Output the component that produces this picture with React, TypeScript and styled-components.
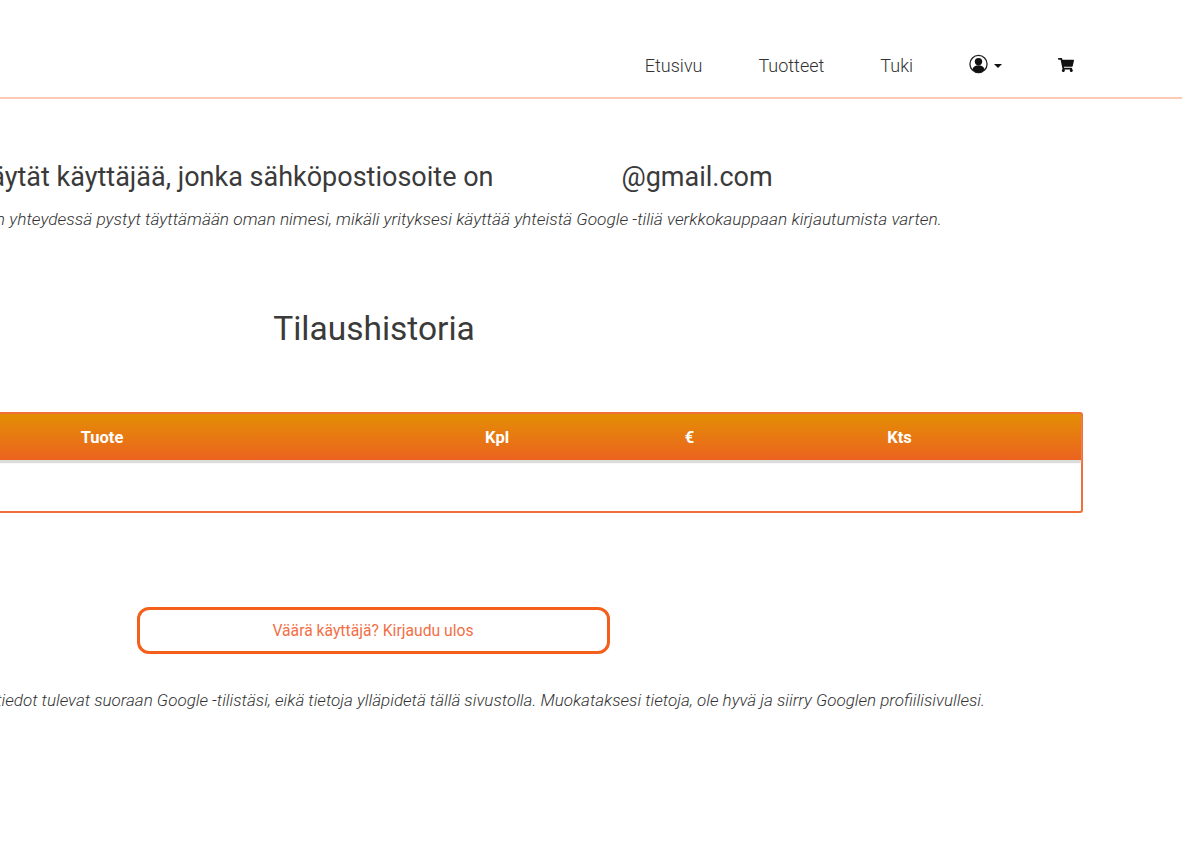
import React from "react";
import styled, { createGlobalStyle } from "styled-components";
import { FaShoppingCart } from "react-icons/fa";

const GlobalStyle = createGlobalStyle`
  html, body {
    margin: 0;
    padding: 0;
    background-color: #fff;
    font-family: Roboto, "Liberation Sans", sans-serif;
  }
`;

const columns = ["", "Tuote", "Kpl", "€", "Kts"];

function App() {
  return (
    <Page>
      <GlobalStyle />
      <NavBar>
        <NavLink>Etusivu</NavLink>
        <NavLink>Tuotteet</NavLink>
        <NavLink>Tuki</NavLink>
        <UserMenu>
          <svg width="19" height="20" viewBox="0 0 19 20">
            <circle cx="9.5" cy="10" r="8.6" fill="#fff" stroke="#222" strokeWidth="1.3" />
            <circle cx="9.5" cy="7.6" r="3.7" fill="#111" />
            <path d="M3.300 15.500c1-3 3.400-4.200 6.200-4.200s5.200 1.200 6.200 4.200A8.300 8.300 0 0 1 9.500 18.500a8.300 8.300 0 0 1-6.200-3z" fill="#111" />
          </svg>
          <Caret />
        </UserMenu>
        <CartLink>
          <FaShoppingCart size={16} />
        </CartLink>
      </NavBar>
      <Content>
        <UserInfo>
          Käytät käyttäjää, jonka sähköpostiosoite on
          <HiddenName />
          @gmail.com
        </UserInfo>
        <Note>
          Huomioithan, että tilauksen yhteydessä pystyt täyttämään oman nimesi,
          mikäli yrityksesi käyttää yhteistä Google -tiliä verkkokauppaan
          kirjautumista varten.
        </Note>
        <Title>Tilaushistoria</Title>
        <OrderTable>
          <TableHead>
            {columns.map((col, i) => (
              <HeadCell key={i}>{col}</HeadCell>
            ))}
          </TableHead>
          <TableBody />
        </OrderTable>
        <LogoutButton>Väärä käyttäjä? Kirjaudu ulos</LogoutButton>
        <FootNote>
          Huomaathan, että kaikki käyttäjätiedot tulevat suoraan Google
          -tilistäsi, eikä tietoja ylläpidetä tällä sivustolla. Muokataksesi
          tietoja, ole hyvä ja siirry Googlen profiilisivullesi.
        </FootNote>
      </Content>
    </Page>
  );
}

export default App;

const Page = styled.div`
  width: 1182px;
  height: 854px;
  overflow: hidden;
  background-color: #fff;
`;

const NavBar = styled.nav`
  box-sizing: border-box;
  height: 99px;
  border-bottom: 2px solid #ffc9b6;
  display: flex;
  align-items: center;
  justify-content: flex-end;
  gap: 56px;
  padding: 33px 108px 0 0;
`;

const NavLink = styled.a`
  font-size: 18px;
  font-weight: 300;
  color: #333;
`;

const UserMenu = styled.div`
  display: flex;
  align-items: center;
  gap: 6px;
  margin-top: -2px;
`;

const Caret = styled.span`
  width: 0;
  height: 0;
  margin-top: 3px;
  border-left: 4px solid transparent;
  border-right: 4px solid transparent;
  border-top: 4px solid #111;
`;

const CartLink = styled.div`
  display: flex;
  color: #111;
`;

const Content = styled.main`
  width: 1420px;
  margin-left: -337px;
  display: flex;
  flex-direction: column;
  align-items: center;
`;

const UserInfo = styled.h3`
  margin: 60px 0 0;
  font-size: 27px;
  line-height: 36px;
  font-weight: 400;
  color: #3a3a3a;
  white-space: nowrap;
`;

const HiddenName = styled.span`
  display: inline-block;
  width: 128px;
`;

const Note = styled.p`
  margin: 14px 0 0;
  font-size: 17.3px;
  line-height: 20px;
  font-weight: 300;
  font-style: italic;
  color: #333;
  white-space: nowrap;
`;

const Title = styled.h2`
  margin: 78px 0 0 2px;
  font-size: 33.5px;
  line-height: 44px;
  font-weight: 400;
  color: #3a3a3a;
`;

const OrderTable = styled.div`
  width: 100%;
  margin-top: 61px;
  box-sizing: border-box;
  border: 2px solid #f0703a;
  border-radius: 3px;
`;

const TableHead = styled.div`
  display: grid;
  grid-template-columns: 206px 462px 328px 57px 1fr;
  align-items: center;
  height: 46px;
  background: linear-gradient(to bottom, #e38e04, #ec6320);
  box-shadow: 0 3px 1px #dcdcdc;
`;

const HeadCell = styled.div`
  text-align: center;
  font-size: 16.5px;
  font-weight: 700;
  color: #fff;
`;

const TableBody = styled.div`
  height: 51px;
`;

const LogoutButton = styled.button`
  width: 473px;
  height: 47px;
  margin-top: 94px;
  box-sizing: border-box;
  border: 3px solid #f4601c;
  border-radius: 12px;
  background-color: #fff;
  font-family: inherit;
  font-size: 15.7px;
  font-weight: 400;
  color: #f26f47;
`;

const FootNote = styled.p`
  margin: 36px 0 0;
  font-size: 17px;
  line-height: 20px;
  font-weight: 300;
  font-style: italic;
  color: #333;
  white-space: nowrap;
`;
